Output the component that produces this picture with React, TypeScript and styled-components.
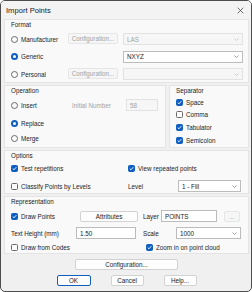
import React from "react";
import styled, { createGlobalStyle, css } from "styled-components";

const GlobalStyle = createGlobalStyle`
   html, body {
      margin: 0;
      padding: 0;
      background: #ffffff;
   }
   body {
      font-family: "Liberation Sans", Arial, sans-serif;
      font-size: 6.3px;
      color: #1b1b1b;
   }
`;

const Window = styled.div`
   width: 250px;
   height: 290px;
   border: 1px solid #4d4d4d;
   border-radius: 5px;
   background: #f0f0f0;
   display: flex;
   flex-direction: column;
   overflow: hidden;
`;

const TitleBar = styled.div`
   flex: none;
   height: 18px;
   display: flex;
   align-items: center;
   justify-content: space-between;
   padding: 0 5px;
   background: #f3f3f3;
`;

const Title = styled.span`
   font-size: 7.6px;
   color: #202020;
`;

const CloseButton = styled.span`
   width: 9px;
   height: 9px;
   display: flex;
   align-items: center;
   justify-content: center;
   margin-right: 1px;
`;

const Body = styled.div`
   flex: 1;
   display: flex;
   flex-direction: column;
   gap: 2px;
   padding: 0 2px 0 3px;
`;

const Group = styled.section<{ $width?: number; $grow?: boolean }>`
   background: #f9f9f9;
   border: 1px solid #e4e4e4;
   padding: 0 4px 1px 6px;
   width: ${({ $width }) => ($width ? `${$width}px` : "auto")};
   flex: ${({ $grow }) => ($grow ? "1" : "none")};
`;

const GroupTitle = styled.div<{ $space: number }>`
   height: 9px;
   line-height: 9px;
   margin-bottom: ${({ $space }) => $space}px;
`;

const Split = styled.div`
   display: flex;
   gap: 3px;
`;

const FormatGrid = styled.div`
   display: grid;
   grid-template-columns: 57px 50px 120px;
   row-gap: 5.5px;
   padding-bottom: 1px;
   & > :nth-child(3n) {
      margin-left: 5px;
   }
`;

const Row = styled.div<{ $top?: number; $height?: number }>`
   height: ${({ $height }) => $height ?? 12}px;
   margin-top: ${({ $top }) => $top ?? 0}px;
   display: flex;
   align-items: center;
`;

const Stack = styled.div<{ $gap: number }>`
   display: flex;
   flex-direction: column;
   gap: ${({ $gap }) => $gap}px;
`;

const Choice = styled.label<{ $width?: number }>`
   display: flex;
   align-items: center;
   gap: 3px;
   white-space: nowrap;
   width: ${({ $width }) => ($width ? `${$width}px` : "auto")};
   flex: none;
`;

const RadioDot = styled.span<{ $on?: boolean }>`
   width: 7px;
   height: 7px;
   box-sizing: border-box;
   border-radius: 50%;
   flex: none;
   ${({ $on }) =>
      $on
         ? css`
              background: #ffffff;
              border: 2.2px solid #0f5fc0;
           `
         : css`
              background: #fbfbfb;
              border: 1px solid #6a6a6a;
           `}
`;

const Box = styled.span<{ $on?: boolean }>`
   width: 7px;
   height: 7px;
   box-sizing: border-box;
   border-radius: 1.5px;
   flex: none;
   display: flex;
   align-items: center;
   justify-content: center;
   background: ${({ $on }) => ($on ? "#0f5fc0" : "#fbfbfb")};
   border: 1px solid ${({ $on }) => ($on ? "#0f5fc0" : "#6a6a6a")};
`;

const Label = styled.span<{ $width?: number; $muted?: boolean; $left?: number }>`
   width: ${({ $width }) => ($width ? `${$width}px` : "auto")};
   margin-left: ${({ $left }) => $left ?? 0}px;
   flex: none;
   white-space: nowrap;
   color: ${({ $muted }) => ($muted ? "#a3a3a3" : "inherit")};
`;

const Button = styled.button<{ $width: number; $disabled?: boolean; $default?: boolean; $left?: number }>`
   width: ${({ $width }) => $width}px;
   height: 11px;
   margin-left: ${({ $left }) => $left ?? 0}px;
   flex: none;
   padding: 0;
   font: inherit;
   border-radius: 2px;
   display: flex;
   align-items: center;
   justify-content: center;
   color: ${({ $disabled }) => ($disabled ? "#a3a3a3" : "#1b1b1b")};
   background: ${({ $disabled }) => ($disabled ? "#f6f6f6" : "#fdfdfd")};
   border: 1px solid ${({ $disabled }) => ($disabled ? "#e6e6e6" : "#d2d2d2")};
   ${({ $default }) =>
      $default &&
      css`
         border: 1.5px solid #0f5fc0;
      `}
`;

const Field = styled.div<{ $width: number; $disabled?: boolean }>`
   width: ${({ $width }) => $width}px;
   height: 12px;
   box-sizing: border-box;
   flex: none;
   display: flex;
   align-items: center;
   justify-content: space-between;
   padding: 0 3px;
   color: ${({ $disabled }) => ($disabled ? "#a3a3a3" : "#1b1b1b")};
   background: ${({ $disabled }) => ($disabled ? "#f6f6f6" : "#ffffff")};
   border: 1px solid ${({ $disabled }) => ($disabled ? "#e2e2e2" : "#bcbcbc")};
`;

const Footer = styled.div`
   display: flex;
   flex-direction: column;
   align-items: center;
   gap: 5px;
   padding-top: 3px;
`;

const ButtonRow = styled.div`
   display: flex;
   gap: 20px;
`;

const Check = () => (
   <svg width="5" height="5" viewBox="0 0 10 10">
      <polyline points="1.5,5.2 4,7.6 8.6,2.4" fill="none" stroke="#ffffff" strokeWidth="1.8" />
   </svg>
);

const Chevron = ({ muted }: { muted?: boolean }) => (
   <svg width="5" height="3" viewBox="0 0 10 6">
      <polyline points="1,1 5,5 9,1" fill="none" stroke={muted ? "#b5b5b5" : "#606060"} strokeWidth="1.2" />
   </svg>
);

const Combo = ({ width, value, disabled }: { width: number; value?: string; disabled?: boolean }) => (
   <Field $width={width} $disabled={disabled}>
      <span>{value}</span>
      <Chevron muted={disabled} />
   </Field>
);

const Radio = ({ label, on, width }: { label: string; on?: boolean; width?: number }) => (
   <Choice $width={width}>
      <RadioDot $on={on} />
      {label}
   </Choice>
);

const CheckBox = ({ label, on, width }: { label: string; on?: boolean; width?: number }) => (
   <Choice $width={width}>
      <Box $on={on}>{on && <Check />}</Box>
      {label}
   </Choice>
);

export default function App() {
   return (
      <>
         <GlobalStyle />
         <Window>
            <TitleBar>
               <Title>Import Points</Title>
               <CloseButton>
                  <svg width="7" height="7" viewBox="0 0 10 10">
                     <path d="M1 1 L9 9 M9 1 L1 9" stroke="#333" strokeWidth="1" />
                  </svg>
               </CloseButton>
            </TitleBar>
            <Body>
               <Group>
                  <GroupTitle $space={4}>Format</GroupTitle>
                  <FormatGrid>
                     <Radio label="Manufacturer" />
                     <Button $width={50} $disabled>Configuration...</Button>
                     <Combo width={120} value="LAS" disabled />
                     <Radio label="Generic" on />
                     <span />
                     <Combo width={120} value="NXYZ" />
                     <Radio label="Personal" />
                     <Button $width={50} $disabled>Configuration...</Button>
                     <Combo width={120} disabled />
                  </FormatGrid>
               </Group>

               <Split>
                  <Group $width={150}>
                     <GroupTitle $space={4}>Operation</GroupTitle>
                     <Row>
                        <Radio label="Insert" width={61} />
                        <Label $width={54} $muted>Initial Number</Label>
                        <Field $width={32} $disabled>58</Field>
                     </Row>
                     <Row $top={6}>
                        <Radio label="Replace" on />
                     </Row>
                     <Row $top={3}>
                        <Radio label="Merge" />
                     </Row>
                  </Group>
                  <Group $grow>
                     <GroupTitle $space={1}>Separator</GroupTitle>
                     <Stack $gap={0.7}>
                        <Row>
                           <CheckBox label="Space" on />
                        </Row>
                        <Row>
                           <CheckBox label="Comma" />
                        </Row>
                        <Row>
                           <CheckBox label="Tabulator" on />
                        </Row>
                        <Row>
                           <CheckBox label="Semicolon" on />
                        </Row>
                     </Stack>
                  </Group>
               </Split>

               <Group>
                  <GroupTitle $space={2}>Options</GroupTitle>
                  <Stack $gap={6}>
                     <Row>
                        <CheckBox label="Test repetitions" on width={117} />
                        <CheckBox label="View repeated points" on />
                     </Row>
                     <Row>
                        <CheckBox label="Classify Points by Levels" width={117} />
                        <Label $width={50}>Level</Label>
                        <Combo width={63} value="1 - Fill" />
                     </Row>
                  </Stack>
               </Group>

               <Group>
                  <GroupTitle $space={4}>Representation</GroupTitle>
                  <Row>
                     <CheckBox label="Draw Points" on width={69} />
                     <Button $width={58}>Attributes</Button>
                     <Label $width={18} $left={5}>Layer</Label>
                     <Field $width={56}>POINTS</Field>
                     <Button $width={16} $disabled $left={7}>...</Button>
                  </Row>
                  <Row $top={5}>
                     <Label $width={65}>Text Height (mm)</Label>
                     <Field $width={60}>1.50</Field>
                     <Label $width={33} $left={7}>Scale</Label>
                     <Combo width={65} value="1000" />
                  </Row>
                  <Row $top={3} $height={10}>
                     <CheckBox label="Draw from Codes" width={135} />
                     <CheckBox label="Zoom in on point cloud" on />
                  </Row>
               </Group>

               <Footer>
                  <Button $width={103}>Configuration...</Button>
                  <ButtonRow>
                     <Button $width={34} $default>OK</Button>
                     <Button $width={33}>Cancel</Button>
                     <Button $width={33}>Help...</Button>
                  </ButtonRow>
               </Footer>
            </Body>
         </Window>
      </>
   );
}
